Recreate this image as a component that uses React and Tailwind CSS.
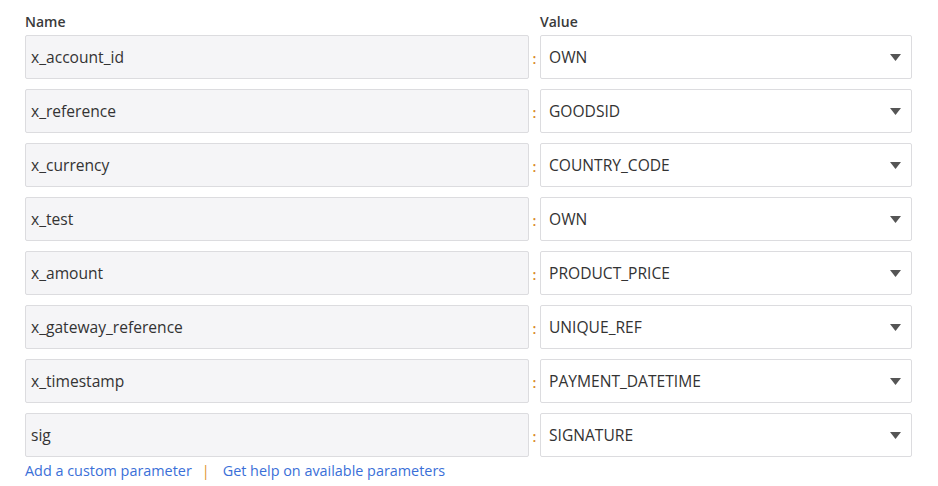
import React from "react";

const rows = [
  ["x_account_id", "OWN"],
  ["x_reference", "GOODSID"],
  ["x_currency", "COUNTRY_CODE"],
  ["x_test", "OWN"],
  ["x_amount", "PRODUCT_PRICE"],
  ["x_gateway_reference", "UNIQUE_REF"],
  ["x_timestamp", "PAYMENT_DATETIME"],
  ["sig", "SIGNATURE"],
];

const Caret = () => (
  <svg width="11" height="7" viewBox="0 0 11 7" className="shrink-0">
    <path d="M0 0 L11 0 L5.5 7 Z" fill="#555555" />
  </svg>
);

export default function App() {
  return (
    <div
      className="w-[938px] h-[486px] bg-white pl-[25px] pt-[12px] text-[#333333]"
      style={{ fontFamily: '"Open Sans", "Liberation Sans", sans-serif' }}
    >
      <div className="flex h-[18px] items-center text-[14px] font-semibold text-[#3a3a3a]">
        <div className="w-[515px]">Name</div>
        <div>Value</div>
      </div>

      <div className="mt-[5px] flex flex-col gap-[10px]">
        {rows.map(([name, value]) => (
          <div key={name} className="flex h-[44px] items-stretch">
            <div className="flex w-[504px] items-center rounded-[2px] border border-[#dcdcdf] bg-[#f5f5f7] pl-[5px] pt-[2px] text-[15.6px]">
              {name}
            </div>
            <div className="flex w-[11px] items-center justify-center pt-[2px] text-[14px] font-semibold text-[#d9891f]">
              :
            </div>
            <div className="flex w-[372px] items-center justify-between rounded-[2px] border border-[#dcdcdf] bg-white pl-[8px] pr-[10px] text-[15.6px]">
              <span className="pt-[2px]">{value}</span>
              <Caret />
            </div>
          </div>
        ))}
      </div>

      <div className="mt-[3px] flex items-center text-[14.4px] text-[#3a6fd8]">
        <span>Add a custom parameter</span>
        <span className="ml-[10px] mr-[13px] text-[#e0962f]">|</span>
        <span>Get help on available parameters</span>
      </div>
    </div>
  );
}
